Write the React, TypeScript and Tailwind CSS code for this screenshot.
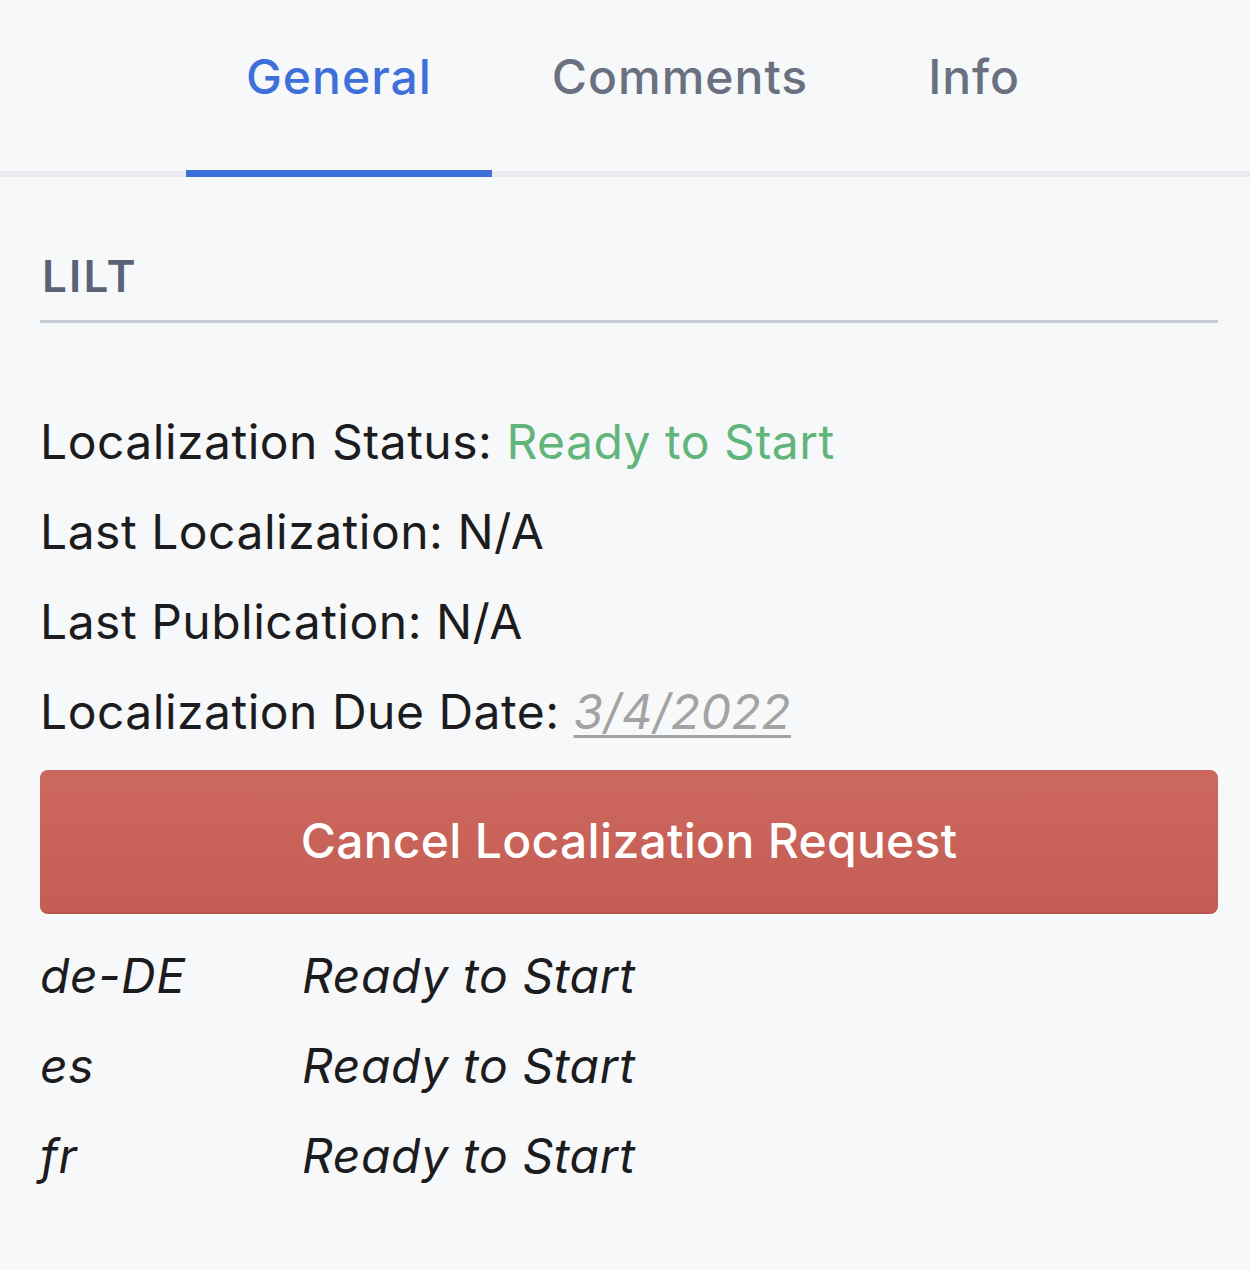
import { useState } from "react";

const tabs = ["General", "Comments", "Info"];

const locales = [
  { code: "de-DE", status: "Ready to Start" },
  { code: "es", status: "Ready to Start" },
  { code: "fr", status: "Ready to Start" },
];

export default function App() {
  const [active, setActive] = useState("General");

  return (
    <div className="w-[1250px] h-[1270px] bg-[#f7f8fa] text-[#1c1c1e] font-['Inter','Liberation_Sans',sans-serif]">
      {/* Tabs */}
      <div className="flex justify-center pl-[16px] border-b-[6px] border-[#e9ebef]">
        {tabs.map((tab) => (
          <button
            key={tab}
            onClick={() => setActive(tab)}
            className={
              tab === active
                ? "h-[177px] px-[60px] pt-[41px] pb-0 mb-[-6px] flex items-start text-[48px] leading-[72px] tracking-[1px] font-medium text-[#3f6fd9] border-b-[7px] border-[#3f6fd9]"
                : "h-[177px] px-[60px] pt-[41px] pb-0 mb-[-6px] flex items-start text-[48px] leading-[72px] tracking-[1px] font-medium text-[#6b7080] border-b-[7px] border-transparent"
            }
          >
            {tab}
          </button>
        ))}
      </div>

      <div className="pl-[40px] pr-[32px]">
        {/* Section header */}
        <div className="pt-[69px] pb-[14px] border-b-[3px] border-[#c6ccd6]">
          <h2 className="pl-[2px] text-[44px] leading-[60px] font-semibold tracking-[0.05em] text-[#5b6275]">LILT</h2>
        </div>

        {/* Status rows */}
        <div className="mt-[74px] text-[48px] leading-[90px] tracking-[0.5px]">
          <p>
            Localization Status: <span className="text-[#62b57a]">Ready to Start</span>
          </p>
          <p>Last Localization: N/A</p>
          <p>Last Publication: N/A</p>
          <p>
            Localization Due Date:{" "}
            <span className="italic text-[#a3a3a3] underline decoration-[3px] underline-offset-[6px]">3/4/2022</span>
          </p>
        </div>

        <button className="mt-[13px] w-full h-[144px] rounded-[8px] bg-gradient-to-b from-[#cd685e] to-[#c45e54] border-b-[2px] border-[#b8554b] text-white text-[48px] tracking-[0.3px] font-medium">
          Cancel Localization Request
        </button>

        {/* Locales */}
        <div className="mt-[17px] text-[48px] leading-[90px] italic tracking-[0.6px]">
          {locales.map((l) => (
            <div key={l.code} className="flex">
              <span className="w-[262px]">{l.code}</span>
              <span>{l.status}</span>
            </div>
          ))}
        </div>
      </div>
    </div>
  );
}
